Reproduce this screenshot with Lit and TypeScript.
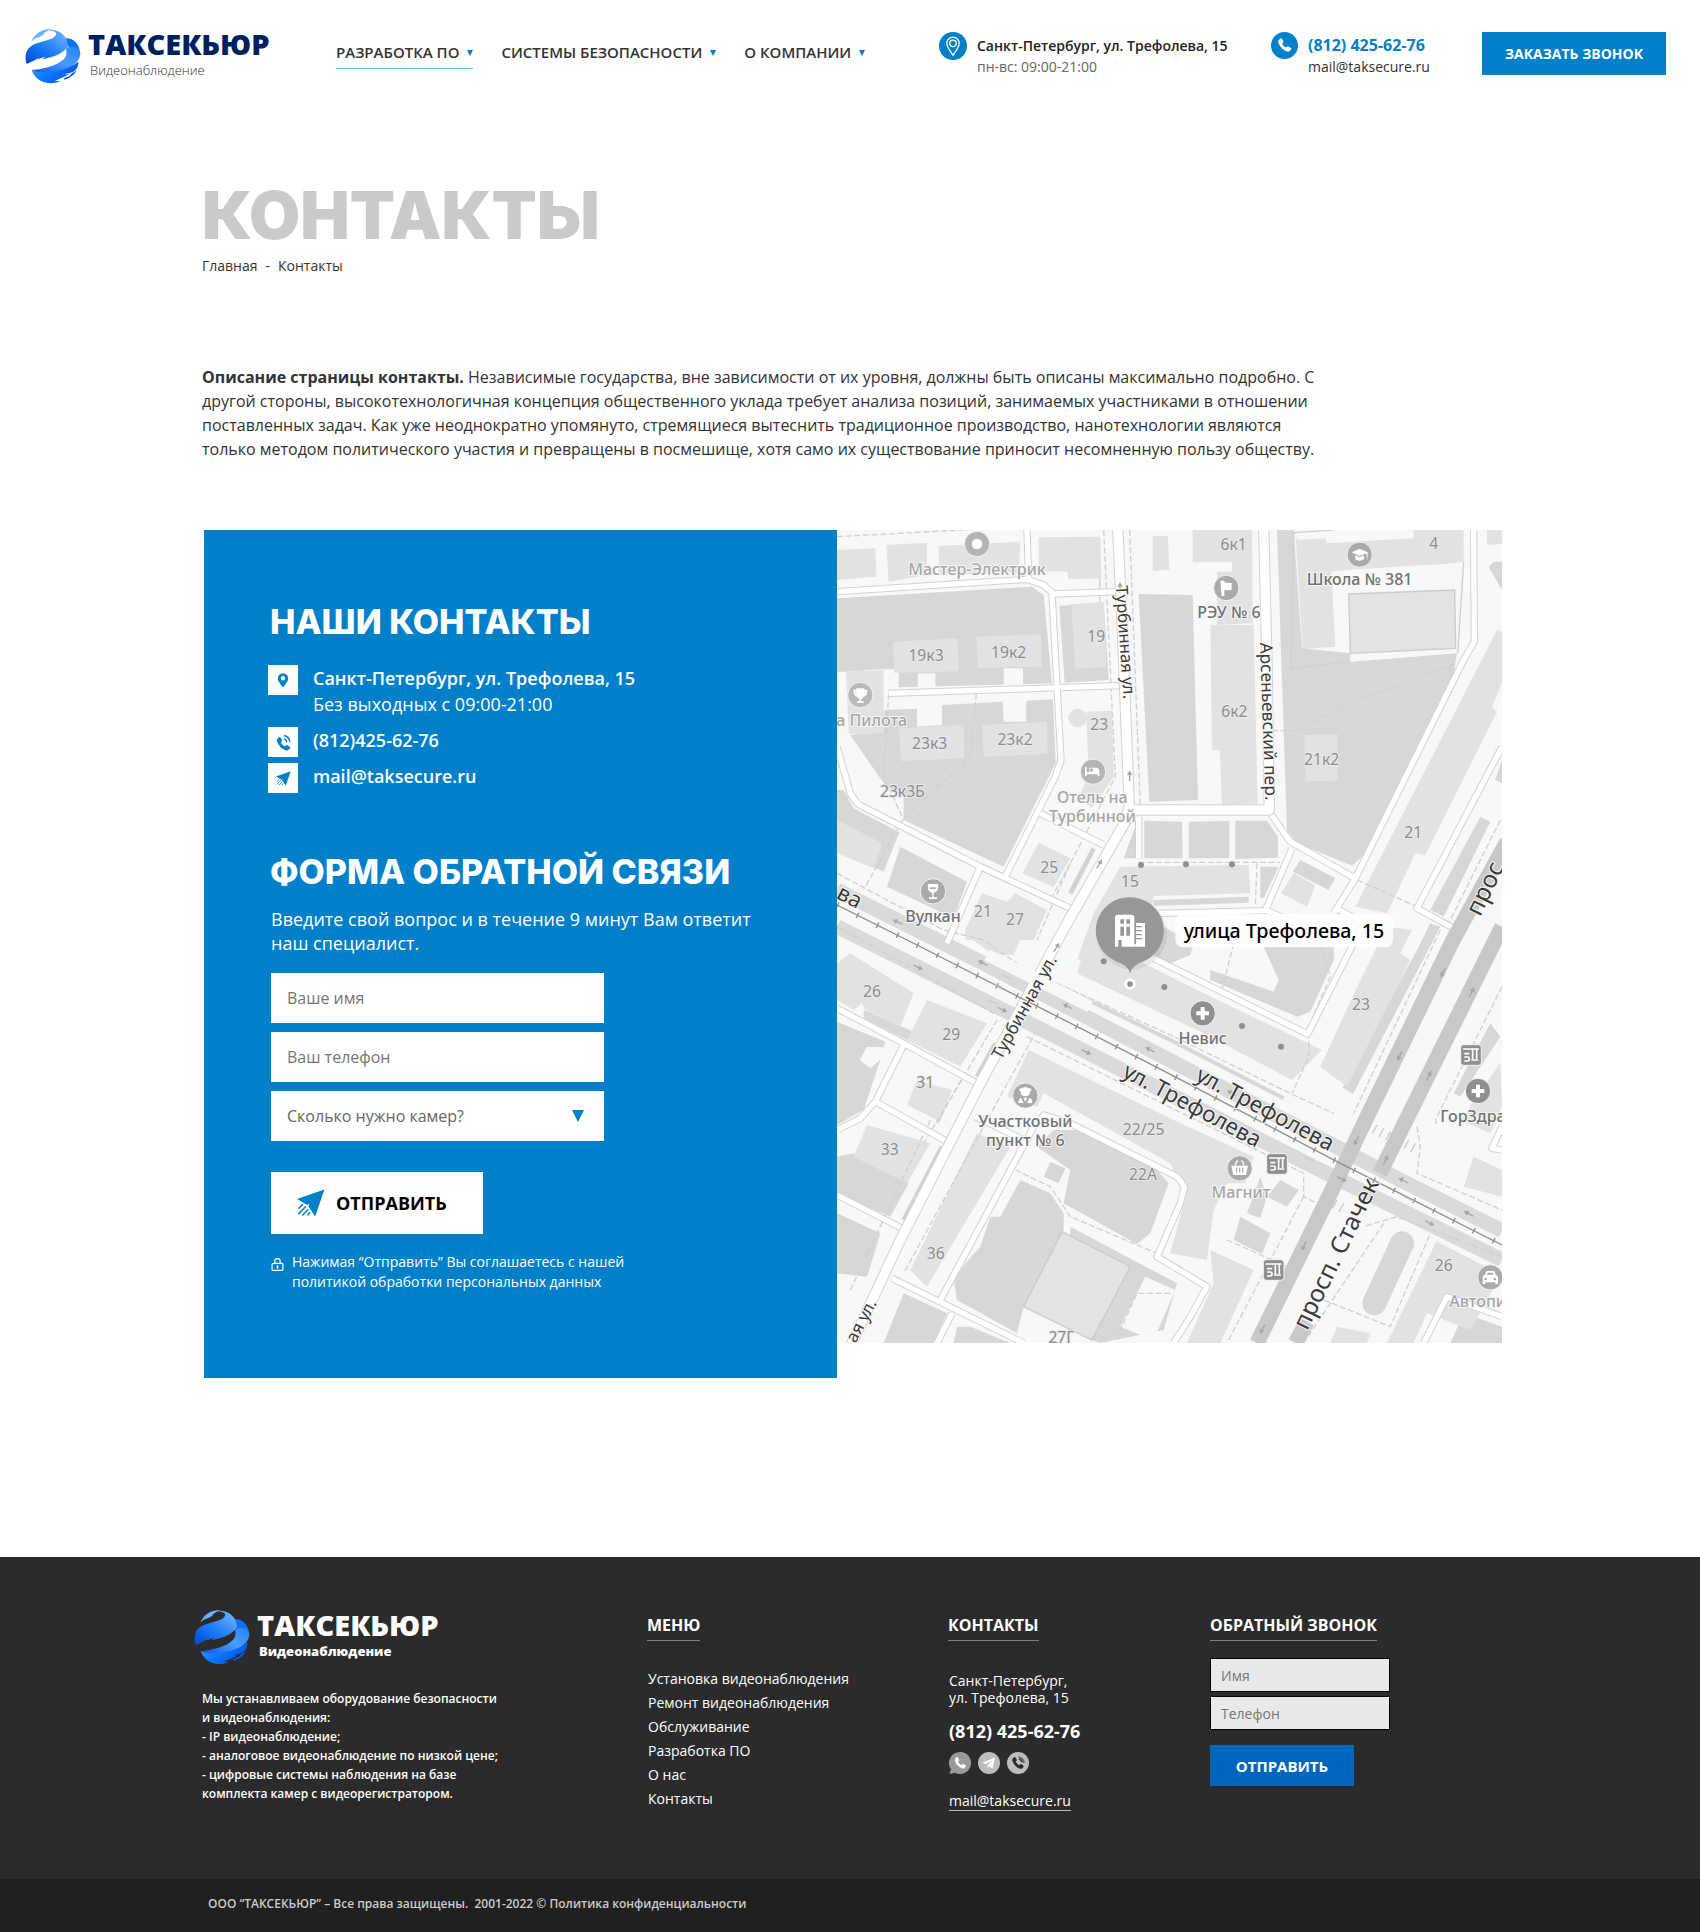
import { LitElement, html, svg, css } from "lit";
import { customElement, property } from "lit/decorators.js";

const SANS = css`"Open Sans", "Noto Sans", sans-serif`;
const DISPLAY = css`Inter, "Open Sans", sans-serif`;

const handset =
  "M6.6 3.2c.6-.6 1.5-.5 2 .2l1.9 2.8c.4.6.3 1.3-.2 1.8l-1.2 1.1c.6 1.9 2.9 4.3 4.9 5l1.2-1.1c.5-.5 1.2-.6 1.8-.2l2.8 1.9c.7.5.8 1.4.2 2l-1.6 1.7c-.8.8-2 1-3.1.7C10.2 17.5 5.9 13 4.3 8c-.3-1.1-.1-2.3.7-3.1z";

const glyphs: Record<string, unknown> = {
  down: svg`<path d="M0 0h24L12 24z" fill="currentColor"/>`,
  pinCircle: svg`<circle cx="12" cy="12" r="12" fill="#0080c8"/>
    <g fill="none" stroke="#fff" stroke-width="1.1">
      <path d="M12 20C9.5 16 6.7 13.2 6.7 9.7a5.3 5.3 0 0 1 10.6 0C17.3 13.2 14.5 16 12 20z"/>
      <circle cx="12" cy="9.7" r="2.8"/></g>`,
  phoneCircle: svg`<circle cx="12" cy="12" r="12" fill="#0080c8"/>
    <path transform="translate(3.4 3.6) scale(.72)" fill="#fff" d=${handset}/>`,
  pin: svg`<path fill="#0080c8" fill-rule="evenodd" d="M12 4.5a5.7 5.7 0 0 0-5.7 5.7c0 3.7 3.2 6.3 5.7 10.3 2.5-4 5.7-6.6 5.7-10.3A5.7 5.7 0 0 0 12 4.5zm0 3.2a2.4 2.4 0 1 1 0 4.8 2.4 2.4 0 0 1 0-4.8z"/>`,
  call: svg`<path transform="translate(1.5 4) scale(.9)" fill="#0080c8" d=${handset}/>
    <path d="M13.5 8.7c1.3.6 2.2 1.6 2.6 3M13.6 5.2c3.2.7 5.2 2.9 5.8 6.1" fill="none" stroke="#0080c8" stroke-width="1.5" stroke-linecap="round"/>`,
  plane: svg`<path fill="#0080c8" d="M23.5.5 0 8.6l8.8 5.2 1.6-1.3-.6 2.4L15.6 23.5z"/>
    <path d="M4.8 13.4 1.6 16.5M7.3 15.2l-5.7 5.9M9.2 17.8 5 22.3M11 20.3l-1.7 2" fill="none" stroke="#0080c8" stroke-width="1.3" stroke-linecap="round"/>`,
  lock: svg`<g fill="none" stroke="#fff" stroke-width="2.2"><rect x="2" y="10" width="20" height="13" rx="2"/>
    <path d="M7 10V6a5 5 0 0 1 10 0V10"/></g><path d="M10.5 13.5h3v6h-3z" fill="#fff"/>`,
  whatsapp: svg`<path fill="#999" d="M12 0a12 12 0 1 1-5.5 22.6L.6 24l1.5-5.3A12 12 0 0 1 12 0z"/>
    <path transform="translate(3 3.4) scale(.76)" fill="#fff" d=${handset}/>`,
  telegram: svg`<circle cx="12" cy="12" r="12" fill="#bdbdbd"/>
    <path fill="#fff" d="M18.5 6 4.6 11.6l4 1.7 7.3-4.8-5.3 5.6-.2 3.5 2-2 3.5 2.6z"/>`,
  viber: svg`<circle cx="12" cy="12" r="12" fill="#bdbdbd"/>
    <path transform="translate(2.4 3.4) scale(.78)" fill="#2b2b2b" d=${handset}/>
    <path d="M12 4.500c4.5.4 7.3 3.3 7.5 7.5h-2l-3-2z" fill="#666"/>
    <path d="M13 8c1.8.3 2.8 1.3 3.1 3" fill="none" stroke="#2b2b2b"/>`,
};

@customElement("ui-icon")
export class UiIcon extends LitElement {
  @property() name = "";
  @property({ type: Number }) size = 24;

  static styles = css`
    :host { display: inline-flex; flex: none; }
    svg { display: block; }
  `;

  render() {
    return html`<svg viewBox="0 0 24 24" width=${this.size} height=${this.size} aria-hidden="true">${glyphs[this.name]}</svg>`;
  }
}

@customElement("brand-logo")
export class BrandLogo extends LitElement {
  @property({ type: Boolean, reflect: true }) inverse = false;

  static styles = css`
    :host { display: block; }
    .logo { display: flex; gap: 7px; color: #001f60; text-decoration: none; }
    .globe { width: 56px; height: 56px; flex: none; }
    .name { font: 800 29px/32px ${SANS}; display: block; }
    .tag { font: 300 13px/16px ${SANS}; display: block; color: #333; padding: 2px 0 0 2px; }
    :host([inverse]) .logo { color: #fff; }
    :host([inverse]) .tag { color: #fff; font-weight: 800; }
  `;

  render() {
    return html`<a class="logo" href="#">
      <svg class="globe" viewBox="14 21 168 170" aria-hidden="true">
        <defs>
          <linearGradient id="a" x1="0" y1="1" x2="1" y2="0"><stop offset="0" stop-color="#0047d6"/><stop offset=".45" stop-color="#1a7df5"/><stop offset="1" stop-color="#7ab8ff"/></linearGradient>
          <linearGradient id="b" x1="0" y1="1" x2="1" y2="0"><stop offset="0" stop-color="#0a55e8"/><stop offset=".5" stop-color="#4b9bff"/><stop offset="1" stop-color="#1a78f5"/></linearGradient>
          <linearGradient id="c" x1="0" y1="0" x2="1" y2=".6"><stop offset="0" stop-color="#4c9dff"/><stop offset=".5" stop-color="#0a7bff"/><stop offset="1" stop-color="#0052e0"/></linearGradient>
        </defs>
        <path fill="url(#a)" d="M15 118C13 95 22 80 38 72C60 62 98 58 106 44C112 33 98 28 84 30C108 19 142 42 145 74C138 90 112 104 90 110L66 117L74 108L50 117L56 111L38 121C24 127 18 132 17 128Z"/>
        <path fill="#6db2ff" d="M32 62C42 38 66 22 96 24C84 28 74 33 66 40L74 37C64 46 54 50 46 52C40 55 36 59 32 62Z"/>
        <path fill="url(#b)" d="M138 53C162 51 178 72 181 98C180 132 138 148 106 154C72 160 44 158 33 148C58 148 108 138 130 116C150 96 128 78 146 80C144 70 142 60 138 53Z"/>
        <path fill="#1470f0" d="M138 53C158 50 172 66 178 88C172 82 158 76 146 79Z"/>
        <path fill="url(#c)" d="M33 149C70 164 140 152 175 123C176 136 170 148 162 152C150 160 144 156 132 162L146 161C136 170 124 172 116 176L104 182L120 182C104 190 84 190 70 185C52 178 38 164 33 149Z"/>
        <path fill="#0a5cf0" d="M134 178C152 172 164 162 170 150L156 158L148 167L130 174Z"/>
      </svg>
      <span><span class="name">ТАКСЕКЬЮР</span><span class="tag">Видеонаблюдение</span></span>
    </a>`;
  }
}

/* Map geometry, three units to a screen pixel. */
const greenery = [
  "0,205 585,170 620,195 645,460 185,472 185,418 125,418 30,425 0,425",
  "142,540 240,536 240,590 315,585 315,525 497,515 500,575 568,575 568,512 648,508 656,700 500,1010 200,870 200,800 140,760 40,615 140,605",
  "667,228 800,216 815,450 683,458",
  "905,192 1067,195 1083,810 937,815",
  "0,780 20,780 50,835 187,907 140,1025 0,960",
  "190,950 390,1055 350,1165 150,1070",
  "900,875 905,875 905,985 860,985", "922,872 1035,875 1037,985 922,985",
  "1055,875 1177,873 1177,985 1055,985", "1195,872 1290,872 1323,920 1323,983 1195,987",
  "950,1110 1235,1100 1235,1118 950,1128", "1270,1010 1325,1010 1280,1105 1270,1105",
  "1320,0 1370,0 1395,355 1540,370 1540,395 1860,370 1850,430 1575,980 1545,1007 1380,940 1350,900",
  "1390,990 1495,1045 1475,1080 1368,1025", "1930,860 1960,875 1820,1160 1780,1140",
  "1955,110 1970,95 1995,95 1995,180", "1995,690 1974,750 1995,760",
  "960,1180 1070,1240 1060,1275 1000,1300 950,1280",
  "1120,1320 1310,1385 1325,1350 1280,1250 1490,1250 1490,1290 1420,1445 1380,1460 1120,1350",
  "1740,1260 1780,1180 1810,1190 1548,1692 1517,1672",
  "0,1475 145,1535 140,1552 90,1550 68,1590 100,1615 130,1590 80,1740 0,1785",
  "0,1880 50,1870 215,1960 160,2060 0,1990", "0,2050 130,2110 90,2240 0,2230",
  "600,1850 650,1800 720,1800 960,1920 995,1960 940,2110 900,2142 680,2020 700,1920",
  "550,1950 640,1990 680,2050 680,2100 560,2330 540,2410 360,2310 350,2250 385,2200 430,2150 460,2060 490,2060",
  "700,2090 1020,2260 980,2400 790,2439 765,2430 880,2210 700,2120",
  "200,2290 330,2350 290,2439 140,2439", "360,2390 400,2390 520,2439 350,2439",
  "640,1895 685,1915 665,1960 620,1940", "80,1440 300,1535 300,1565 210,1530 80,1465",
  "1210,2060 1300,2110 1275,2172 1190,2130", "1330,1950 1385,1980 1350,2030 1290,2000",
  "1270,1940 1290,2000 1270,2065 1230,2050", "1880,2350 1995,2390 1995,2439 1840,2439",
  "1990,1520 1870,1700 1850,1690 1960,1480",
];
const buildings = [
  "0,60 115,55 118,140 0,150", "148,45 270,38 270,135 155,155", "305,48 550,35 545,130 305,135",
  "605,22 790,20 793,145 695,148 690,125 605,122",
  "27,425 140,420 140,610 35,612", "168,335 362,325 364,424 172,428", "418,320 612,312 615,410 422,414",
  "186,595 380,585 382,685 192,693", "435,585 630,575 632,672 440,680", "703,222 800,218 808,412 715,415",
  "748,545 825,542 830,740 765,835 725,800 755,740", "0,870 135,940 110,1015 0,970",
  "605,938 700,985 650,1072 557,1030", "435,1090 510,1115 535,1090 630,1140 590,1230 385,1230 385,1200",
  "1067,0 1245,0 1247,280 1140,285 1140,125 1185,125 1185,97 1067,97",
  "1120,285 1250,285 1262,820 1155,825 1148,660 1125,660", "947,18 993,18 997,120 947,122",
  "1375,5 1380,30 1465,25 1470,40 1730,25 1730,0 1880,0 1880,95 1800,105 1770,110 1750,105 1483,125 1495,350 1397,357",
  "1402,615 1502,613 1503,752 1405,754", "1980,300 1995,305 1995,460 1965,530 1980,545 1765,975 1735,970 1650,1150 1555,1130",
  "1370,1030 1435,1065 1410,1130 1332,1090", "1950,0 1995,0 1995,42 1950,45",
  "850,1010 1235,1005 1240,1090 950,1098 930,1250 720,1290 770,1150",
  "720,1330 750,1230 900,1290 1100,1390 1455,1560 1365,1650 1100,1510",
  "1570,1350 1650,1190 1725,1200 1690,1270 1720,1290 1530,1670 1450,1610",
  "0,1300 40,1270 230,1390 190,1490 85,1440 75,1420 50,1440 0,1410",
  "270,1410 450,1480 370,1610 210,1530", "240,1650 345,1680 310,1775 210,1725",
  "90,1785 280,1840 210,1960 50,1880", "420,1810 520,1850 270,2270 220,2220 235,2190",
  "575,1560 1010,1770 1250,1880 1225,1960 1170,1960 1130,2040 1110,2190 1000,2170 1045,2000 1000,1900 620,1690 600,1730 510,1700",
  "1120,2160 1250,2220 1150,2439 1050,2439 1130,2260", "1910,1880 1995,1920 1995,2000 1880,1970",
  "1800,2130 1995,2230 1900,2400 1770,2350 1730,2439 1650,2439", "1990,1600 1870,1770 1960,1810 1995,1730",
  "1500,2390 1600,2410 1590,2439 1480,2439", "550,1225 400,1225 470,1275 530,1275",
];
const yards = ["1495,122 1885,98 1865,368 1540,395 1540,370 1495,350", "925,2240 1015,2280 950,2430 850,2390", "242,430 295,430 295,475 242,475", "500,415 558,415 558,465 500,465"];
const courts = ["1535,192 1853,180 1856,355 1540,370", "675,2105 880,2210 765,2430 560,2330"];
const lanes = [
  "0,185 570,148 620,165 650,192 840,185", "570,0 575,148", "645,190 672,690 655,740 505,1040",
  "155,490 845,467", "0,650 40,790 62,822 430,1010 700,1135", "430,1010 330,1240", "610,850 800,945",
  "1300,850 1360,935 1555,1045", "1910,0 1912,335 1880,390 1555,1045 1490,1150", "1365,955 1285,1142 965,1150",
  "1995,650 1740,1135 1860,1200", "950,1285 1412,1512 1580,1180 1500,1135", "0,1435 200,1540 420,1660",
  "200,1545 115,1715 70,1765 0,1800", "115,1715 330,1835", "0,1995 195,2095", "165,2245 560,2439",
  "1020,1940 700,1780 620,1755 590,1790 310,2310", "415,1760 560,1830", "345,2350 300,2439",
  "1020,1940 1042,1970 1030,2020 960,2180 1110,2270 1060,2360 1010,2439", "1290,1142 1450,1210",
  "1995,1860 1965,1855 1995,1790", "1995,2360 1830,2300 1760,2439", "905,985 905,860",
];
const dashes = [
  "0,20 560,-10", "800,0 835,740 700,1000 600,1230", "878,0 910,830 690,1200", "155,490 140,740 200,870", "418,490 400,680 200,865 85,1070",
  "905,997 1330,997", "1305,602 1380,602 1520,525 1860,400", "1260,1000 1255,1130", "0,1030 320,1200 440,1230 540,1300",
  "0,1190 470,1450", "570,1520 1280,1870 1400,1930 1400,2000 1440,2020", "660,1360 1000,1515 1370,1695 1490,1750",
  "480,1470 380,1640 260,1840", "600,1500 500,1680 200,2230", "280,1770 40,2280", "535,1920 640,1970 700,2060 960,2170",
  "1460,2310 1660,2390 1780,2110", "1995,2180 1680,2060 1580,2090", "1995,1370 1795,1770 1800,1790", "1740,1790 1750,1850 1740,1930 1995,2040",
  "1000,2290 900,2290 850,2400 790,2430", "1190,1240 1155,1380", "1450,1240 1480,1340 1415,1490 1415,1580 1365,1690", "1990,870 1830,1190",
  "1560,1050 1740,1130", "1400,2000 1170,2439", "1640,2080 1400,2439", "1170,2130 1350,2210", "1810,1200 1550,1750",
  "372,1650 300,1780", "700,1000 640,1110",
];
const numbers: [string, number, number][] = [
  ["19к3", 267, 392], ["19к2", 515, 383], ["19", 778, 335], ["23к3", 278, 656], ["23к2", 534, 645], ["23", 787, 600],
  ["23к3Б", 196, 802], ["25", 637, 1029], ["15", 879, 1070], ["21", 438, 1160], ["27", 534, 1185], ["6к1", 1190, 60],
  ["4", 1790, 58], ["6к2", 1192, 561], ["21к2", 1454, 705], ["21", 1729, 923], ["26", 105, 1400], ["29", 343, 1530],
  ["31", 265, 1675], ["33", 158, 1874], ["36", 296, 2188], ["22/25", 920, 1816], ["22А", 918, 1949], ["27Г", 673, 2438],
  ["23", 1572, 1440], ["26", 1820, 2222],
];
const places: [string, number, number, string][] = [
  ["Мастер-Электрик", 420, 135, "faint"], ["а Пилота", 104, 588, "faint"], ["Отель на", 766, 820, "faint"],
  ["Турбинной", 766, 876, "faint"], ["Вулкан", 288, 1176, "place"], ["РЭУ № 6", 1176, 265, "place"],
  ["Школа № 381", 1568, 166, "place"], ["Невис", 1097, 1541, "place"], ["Участковый", 565, 1790, "place"],
  ["пункт № 6", 565, 1847, "place"], ["Магнит", 1212, 2005, "faint"], ["ГорЗдра", 1908, 1775, "place"],
  ["Автопи", 1922, 2332, "faint"],
];
const streets: [string, number, number, number, number][] = [
  ["Турбинная ул.", 848, 338, 86, 50], ["Арсеньевский пер.", 1277, 575, 88, 52], ["Турбинная ул.", 577, 1440, -61, 51],
  ["ая ул.", 88, 2380, -62, 51], ["ва", 28, 1120, 27, 66], ["ул. Трефолева", 1274, 1757, 28, 67],
  ["ул. Трефолева", 1055, 1746, 28, 67], ["просп. Стачек", 1519, 2182, -64, 73], ["прос", 1966, 1086, -64, 73],
];
const pois: [number, number, string, unknown][] = [
  [420, 42, "#b4b4b4", svg`<circle r="16" fill="#fff"/>`],
  [70, 495, "#b9b9b9", svg`<path d="M-12-20h24v4h9c0 14-4 20-12 21-2 5-5 6-7 7v7h8v5h-20v-5h8v-7c-3-1-6-3-7-7-8-1-12-8-12-21h9zm-3 8c0 5 1 8 4 9zm30 0-4 9c3-1 4-4 4-9z" fill="#fff"/>`],
  [768, 725, "#b4b4b4", svg`<path d="M-24-14h5V2h8v-14h22q8 2 8 12v14h-5v-6h-33v6h-5z" fill="#fff"/><circle cx="-5" cy="-5" r="5" fill="#b4b4b4"/>`],
  [288, 1084, "#aaa", svg`<path d="M-15-22h30q4 22-13 27v13h10v5h-24v-5h10V5q-17-5-13-27z" fill="#fff"/><path d="M-10-12h20v5h-20z" fill="#aaa"/>`],
  [1168, 174, "#aaa", svg`<path d="M-18-22l12 0v4q12 5 22 2v21q-12 4-22 0v19h-8z" fill="#fff"/>`],
  [1568, 74, "#aaa", svg`<path d="M0-18 24-7 23 18 20-4 0 4-24-7zM-13 2l13 6 13-6v12q-13 8-26 0z" fill="#fff"/>`],
  [1097, 1450, "#8f8f8f", svg`<path d="M-6-19H6V-6h13V6H6v13H-6V6h-13V-6h13z" fill="#fff"/>`],
  [1923, 1683, "#8f8f8f", svg`<path d="M-6-19H6V-6h13V6H6v13H-6V6h-13V-6h13z" fill="#fff"/>`],
  [565, 1697, "#aaa", svg`<path d="M-19-20 0-26 19-20 14-11q0 13-14 13t-14-13zM-21 22q0-12 8-16L-5 22zM21 22q0-12-8-16L5 22zM-6 6h12L0 18z" fill="#fff"/>`],
  [1208, 1915, "#aaa", svg`<path d="M-25-8h50l-6 28h-38z" fill="#fff"/><path d="M-13-8q2-14 8-14M13-8q-2-14-8-14" fill="none" stroke="#fff" stroke-width="4"/><path d="M-9-2v14M0-2v14M9-2v14" stroke="#aaa" stroke-width="4"/>`],
  [1960, 2242, "#aaa", svg`<path d="M-23 0q1-6 7-8l4-11h24l4 11q6 2 7 8v20h-8v-5h-30v5h-8z" fill="#fff"/><path d="M-10-8l2-6H8l2 6z" fill="#aaa"/><circle cx="-14" cy="5" r="4" fill="#aaa"/><circle cx="14" cy="5" r="4" fill="#aaa"/>`],
];
const stops: [number, number][] = [[1902, 1575], [1320, 1902], [1310, 2220]];
const entrances: [number, number][] = [[912, 1005], [1047, 1003], [1185, 1003], [800, 1294], [982, 1371], [1215, 1488], [1332, 1550]];
const arrows: [number, number, number][] = [
  [849, 170, -90], [878, 735, -90], [788, 1000, -60], [660, 1250, -60], [180, 1175, 205], [245, 1313, 27], [435, 1298, 207], [498, 1440, 27],
  [690, 1428, 207], [750, 1567, 27], [937, 1558, 207], [1182, 1688, 207], [1517, 1948, 27], [1780, 2080, 27], [1697, 1950, 207], [1893, 2050, 207],
  [1817, 1330, 117], [1687, 1580, 117], [1557, 1834, 117], [1400, 2150, 117], [1275, 2400, 117], [1905, 1385, -63], [1777, 1635, -63], [1647, 1888, -63],
];

@customElement("street-map")
export class StreetMap extends LitElement {
  static styles = css`
    :host { display: block; }
    svg { display: block; width: 100%; height: auto; }
    text { font-family: "Noto Sans", "Open Sans", sans-serif; text-anchor: middle; paint-order: stroke; stroke: #f8f8f8; stroke-width: 6px; stroke-linejoin: round; }
    .number { font-size: 47px; fill: #8c8c8c; stroke: #e9e9e9; }
    .place { font-size: 48px; font-weight: 500; fill: #717171; }
    .faint { font-size: 48px; font-weight: 500; fill: #a6a6a6; }
    .street { fill: #3a3a3a; }
    .target { font-size: 59px; font-weight: 500; fill: #000; stroke: none; }
    .casing, .lane, .dash { fill: none; stroke-linejoin: round; }
    .casing { stroke: #d2d2d2; stroke-width: 22px; }
    .lane { stroke: #fff; stroke-width: 16px; }
    .wide.casing { stroke-width: 34px; }
    .wide.lane { stroke-width: 28px; }
    .dash { stroke: #d0d0d0; stroke-width: 4px; stroke-dasharray: 18 8; }
    .green { fill: #d7d7d7; }
    .house { fill: #e2e2e2; }
    .yard { fill: #f8f8f8; }
    .court { fill: #e3e3e3; stroke: #cbcbcb; stroke-width: 4px; }
    .carriage { fill: none; stroke: #dadada; stroke-width: 44px; }
    .avenue { fill: none; stroke: #c8c8c8; stroke-width: 46px; }
  `;

  render() {
    const wide = [
      "842,-10 856,300 877,830 862,880 690,1180 430,1660 190,2130 40,2450",
      "885,840 1297,840 1290,400 1280,-10",
    ];
    return html`<svg viewBox="0 0 1995 2439" role="img" aria-label="улица Трефолева, 15">
      <rect width="1995" height="2439" fill="#f8f8f8"/>
      ${greenery.map((p) => svg`<polygon class="green" points=${p}/>`)}
      ${buildings.map((p) => svg`<polygon class="house" points=${p}/>`)}
      ${yards.map((p) => svg`<polygon class="yard" points=${p}/>`)}
      ${courts.map((p) => svg`<polygon class="court" points=${p}/>`)}
      <circle cx="722" cy="564" r="28" fill="#e2e2e2"/>
      <path d="M1695 2140 1612 2320" stroke="#d7d7d7" stroke-width="72" stroke-linecap="round"/>
      <path d="M788 145V215M1490 0 1370 8 1362 415 1540 395M1880 95 1862 370" fill="none" stroke="#d0d0d0" stroke-width="4"/>
      <path d="M770 955 700 1090M475 1540 420 1640M315 1850 200 2070" stroke="#d2d2d2" stroke-width="14"/>
      <path d="M0 1125 1995 2145" stroke="#f8f8f8" stroke-width="160"/>
      <polyline class="carriage" points="0,1080 435,1298 935,1558 1690,1950 1995,2102"/>
      <polyline class="carriage" points="0,1190 240,1310 750,1567 1505,1948 1995,2190"/>
      <path d="M660 1365 1000 1530 1340 1705" fill="none" stroke="#d7d7d7" stroke-width="12"/>
      ${dashes.map((p) => svg`<polyline class="dash" points=${p}/>`)}
      ${lanes.map((p) => svg`<polyline class="casing" points=${p}/>`)}
      ${lanes.map((p) => svg`<polyline class="lane" points=${p}/>`)}
      ${wide.map((p) => svg`<polyline class="casing wide" points=${p}/>`)}
      ${wide.map((p) => svg`<polyline class="lane wide" points=${p}/>`)}
      <path d="M450 1275 760 1430" stroke="#f8f8f8" stroke-width="36"/>
      <polyline class="avenue" points="2010,935 1848,1230 1600,1740 1490,1970 1260,2439"/>
      <polyline class="avenue" points="1995,1190 1628,1930"/>
      <path d="M1410 2375 1375 2439" stroke="#c8c8c8" stroke-width="46"/>
      <path d="M0 1125 240 1245 960 1612 1500 1895 1995 2145" fill="none" stroke="#8e8e8e" stroke-width="4"/>
      <path d="M0 1125 240 1245 960 1612 1500 1895 1995 2145" fill="none" stroke="#8e8e8e" stroke-width="18" stroke-dasharray="4 63"/>
      <path d="M470 1360l26 12M455 1410l26 12M495 1335l26 12M1565 1770l-14 26M1600 1775l-14 26M1620 1785l-14 26M1640 1795l-14 26M1660 1805l-14 26M1715 1830l-14 26M1735 1840l-14 26M1500 2010l-14 26M1520 2020l-14 26M1400 1880l30 14M1700 2000l30 14" stroke="#cacaca" stroke-width="4"/>
      ${arrows.map(([x, y, a]) => svg`<path transform="translate(${x} ${y}) rotate(${a})" d="M-18-2H0V-8L14 0 0 8V2H-18z" fill="#a6a6a6"/>`)}
      ${entrances.map(([x, y]) => svg`<circle cx=${x} cy=${y} r="9" fill="#8f8f8f"/>`)}
      ${numbers.map(([t, x, y]) => svg`<text class="number" x=${x} y=${y}>${t}</text>`)}
      ${streets.map(([t, x, y, a, s]) => svg`<text class="street" font-size=${s} transform="translate(${x} ${y}) rotate(${a})">${t}</text>`)}
      ${places.map(([t, x, y, c]) => svg`<text class=${c} x=${x} y=${y}>${t}</text>`)}
      ${pois.map(([x, y, c, g]) => svg`<g transform="translate(${x} ${y})"><circle r="38" fill=${c} stroke="#f4f4f4" stroke-width="3"/>${g}</g>`)}
      ${stops.map(([x, y]) => svg`<g transform="translate(${x} ${y})"><rect x="-31" y="-31" width="62" height="62" rx="9" fill="#8f8f8f" stroke="#f4f4f4" stroke-width="3"/>
        <path d="M-24-18H24M-5-4H-20M-20 6H-11A6 6 0 0 1-11 18H-20M5-18V12M17-18V12M1 15H22" fill="none" stroke="#fff" stroke-width="5"/></g>`)}
      <rect x="1015" y="1152" width="653" height="100" rx="22" fill="#fff" fill-opacity=".85"/>
      <text class="target" x="1341" y="1224">улица Трефолева, 15</text>
      <circle cx="884" cy="1212" r="106" fill="#000" opacity=".06"/>
      <path d="M880 1102a100 100 0 0 1 42 191q-38 12-43 38q-4-26-44-38a100 100 0 0 1 45-191z" fill="#979797"/>
      <path d="M834 1163q0-9 9-9h40q9 0 9 9v80h5v-64h27v71h-70v-20h-10v20h-10z" fill="#fff"/>
      <path d="M850 1168h11v13h-11zM868 1168h11v13h-11zM850 1190h11v27h-11zM868 1190h11v27h-11zM897 1188h18v4h-18zM897 1200h18v4h-18zM897 1212h18v4h-18zM897 1224h18v4h-18z" fill="#979797"/>
      <circle cx="879" cy="1362" r="13" fill="#8f8f8f" stroke="#fff" stroke-width="9"/>
    </svg>`;
  }
}

@customElement("app-root")
export class AppRoot extends LitElement {
  static styles = css`
    :host { display: block; background: #fff; color: #333; font: 400 16px/24px ${SANS}; }
    * { box-sizing: border-box; }
    h1, h2, h3, p, ul { margin: 0; padding: 0; }
    ul { list-style: none; }
    a { color: inherit; text-decoration: none; }
    button { border: 0; padding: 0; cursor: pointer; font-family: inherit; }
    input, select { border: 0; border-radius: 0; width: 100%; font-family: inherit; color: #666; appearance: none; background: #fff; }
    input::placeholder { color: #757575; opacity: 1; }

    .header { display: grid; grid-template-columns: 311fr 603fr 332fr 211fr 184fr; align-items: start; padding: 28px 34px 9px 25px; }
    .nav { display: flex; gap: 28px; padding-top: 11px; }
    .nav-link { display: flex; align-items: center; gap: 8px; font-size: 15px; line-height: 27px; padding-bottom: 2px; font-weight: 600; white-space: nowrap; border-bottom: 1px solid transparent; }
    .nav-link.active { border-color: #72bde2; }
    .nav-link ui-icon { color: #0080c8; }
    .info { display: flex; align-items: flex-start; gap: 10px; white-space: nowrap; }
    .info-lines { display: flex; flex-direction: column; font-size: 14px; line-height: 21px; padding-top: 7px; }
    .strong { font-weight: 600; color: #222; }
    .muted { color: #666; }
    .tel { font-size: 16px; font-weight: 700; color: #0080c8; }
    .info ui-icon { padding-top: 4px; }
    .order { height: 43px; margin-top: 4px; background: #0080c8; color: #fff; font-size: 14px; font-weight: 700; }

    .intro { padding: 88px 198px 0 202px; }
    .title { font: 900 66px/68px ${DISPLAY}; color: #cacaca; }
    .crumbs { display: flex; gap: 8px; font-size: 14px; line-height: 20px; padding-top: 7px; }
    .about { padding-top: 89px; }

    .contact { display: grid; grid-template-columns: 633fr 665fr; align-items: start; padding: 69px 198px 179px 204px; }
    .panel { background: #0080c8; color: #fff; padding: 72px 66px 86px; }
    .heading { font: 800 34px/40px ${DISPLAY}; white-space: nowrap; }
    .list { display: grid; gap: 6px; padding-top: 23px; margin-left: -2px; }
    .row { display: flex; gap: 15px; font-size: 18px; line-height: 26px; font-weight: 600; }
    .row .plain { display: block; font-weight: 400; padding-bottom: 4px; }
    .badge { display: flex; align-items: center; justify-content: center; width: 30px; height: 30px; background: #fff; flex: none; }
    .form-heading { padding-top: 59px; }
    .lead { font-size: 18px; padding: 15px 0 0 1px; }
    .form { display: grid; gap: 9px; width: 333px; padding-top: 18px; margin-left: 1px; }
    .field { height: 50px; padding: 0 16px; font-size: 16px; }
    .select { display: grid; align-items: center; }
    .select > * { grid-area: 1 / 1; }
    .select ui-icon { justify-self: end; color: #0080c8; padding-right: 20px; pointer-events: none; }
    .send { display: flex; align-items: center; gap: 11px; width: 212px; height: 62px; margin-top: 22px; padding-left: 26px; background: #fff; color: #000; font-size: 18px; font-weight: 700; }
    .agree { display: flex; gap: 8px; font-size: 14px; line-height: 20px; font-weight: 500; padding-top: 18px; margin-left: 1px; }
    .agree ui-icon { padding-top: 6px; }

    .footer { background: #2b2b2b; color: #fff; display: grid; grid-template-columns: 453fr 301fr 262fr 292fr; padding: 52px 198px 66px 194px; font-size: 14px; }
    .blurb { font-size: 12px; line-height: 19px; font-weight: 600; padding: 24px 0 0 8px; }
    .col { padding-top: 4px; }
    .col-title { display: inline-block; font-size: 16px; line-height: 24px; font-weight: 700; padding-bottom: 3px; border-bottom: 1px solid #808080; }
    .menu { font-weight: 500; padding: 26px 0 0 1px; }
    .address { line-height: 17px; font-weight: 500; padding: 31px 0 0 1px; }
    .foot-tel { display: block; font-size: 18px; font-weight: 700; padding: 13px 0 0 1px; }
    .social { display: flex; gap: 7px; padding: 9px 0 8px 1px; }
    .mail { font-weight: 500; border-bottom: 1px solid #bbb; margin-left: 1px; }
    .callback { display: grid; gap: 4px; width: 180px; padding-top: 17px; }
    .small-field { height: 34px; padding: 0 10px; border: 1px solid #000; background: #e9e9e9; font-size: 14px; }
    .small-send { width: 144px; height: 41px; margin-top: 11px; background: #0066bd; color: #fff; font-size: 15px; font-weight: 700; }
    .copy { background: #202020; color: #ccc; font-size: 12px; line-height: 18px; font-weight: 600; padding: 16px 198px 20px 208px; white-space: pre-wrap; }
  `;

  render() {
    const nav = ["РАЗРАБОТКА ПО", "СИСТЕМЫ БЕЗОПАСНОСТИ", "О КОМПАНИИ"];
    const menu = ["Установка видеонаблюдения", "Ремонт видеонаблюдения", "Обслуживание", "Разработка ПО", "О нас", "Контакты"];
    return html`
      <header class="header">
        <brand-logo></brand-logo>
        <nav class="nav">
          ${nav.map((t, i) => html`<a class="nav-link ${i === 0 ? "active" : ""}" href="#">${t}<ui-icon name="down" size="6"></ui-icon></a>`)}
        </nav>
        <div class="info">
          <ui-icon name="pinCircle" size="28"></ui-icon>
          <div class="info-lines"><span class="strong">Санкт-Петербург, ул. Трефолева, 15</span><span class="muted">пн-вс: 09:00-21:00</span></div>
        </div>
        <div class="info">
          <ui-icon name="phoneCircle" size="27"></ui-icon>
          <div class="info-lines"><a class="tel" href="tel:+78124256276">(812) 425-62-76</a><a href="mailto:mail@taksecure.ru">mail@taksecure.ru</a></div>
        </div>
        <button class="order" type="button">ЗАКАЗАТЬ ЗВОНОК</button>
      </header>

      <main>
        <section class="intro">
          <h1 class="title">КОНТАКТЫ</h1>
          <nav class="crumbs"><a href="#">Главная</a><span>-</span><span>Контакты</span></nav>
          <p class="about"><b>Описание страницы контакты.</b> Независимые государства, вне зависимости от их уровня, должны быть описаны максимально подробно. С<br>другой стороны, высокотехнологичная концепция общественного уклада требует анализа позиций, занимаемых участниками в отношении<br>поставленных задач. Как уже неоднократно упомянуто, стремящиеся вытеснить традиционное производство, нанотехнологии являются<br>только методом политического участия и превращены в посмешище, хотя само их существование приносит несомненную пользу обществу.</p>
        </section>

        <section class="contact">
          <div class="panel">
            <h2 class="heading">НАШИ КОНТАКТЫ</h2>
            <ul class="list">
              <li class="row"><span class="badge"><ui-icon name="pin" size="22"></ui-icon></span><span>Санкт-Петербург, ул. Трефолева, 15<span class="plain">Без выходных с 09:00-21:00</span></span></li>
              <li class="row"><span class="badge"><ui-icon name="call" size="22"></ui-icon></span><a href="tel:+78124256276">(812)425-62-76</a></li>
              <li class="row"><span class="badge"><ui-icon name="plane" size="15"></ui-icon></span><a href="mailto:mail@taksecure.ru">mail@taksecure.ru</a></li>
            </ul>
            <h2 class="heading form-heading">ФОРМА ОБРАТНОЙ СВЯЗИ</h2>
            <p class="lead">Введите свой вопрос и в течение 9 минут Вам ответит<br>наш специалист.</p>
            <form class="form">
              <input class="field" type="text" placeholder="Ваше имя" aria-label="Ваше имя">
              <input class="field" type="tel" placeholder="Ваш телефон" aria-label="Ваш телефон">
              <div class="select">
                <select class="field" aria-label="Сколько нужно камер?"><option>Сколько нужно камер?</option></select>
                <ui-icon name="down" size="12"></ui-icon>
              </div>
              <button class="send" type="button"><ui-icon name="plane" size="28"></ui-icon>ОТПРАВИТЬ</button>
            </form>
            <p class="agree"><ui-icon name="lock" size="13"></ui-icon><span>Нажимая “Отправить” Вы соглашаетесь с нашей<br>политикой обработки персональных данных</span></p>
          </div>
          <street-map></street-map>
        </section>
      </main>

      <footer>
        <div class="footer">
          <div>
            <brand-logo inverse></brand-logo>
            <p class="blurb">Мы устанавливаем оборудование безопасности<br>и видеонаблюдения:<br>- IP видеонаблюдение;<br>- аналоговое видеонаблюдение по низкой цене;<br>- цифровые системы наблюдения на базе<br>комплекта камер с видеорегистратором.</p>
          </div>
          <div class="col">
            <h3 class="col-title">МЕНЮ</h3>
            <ul class="menu">${menu.map((t) => html`<li><a href="#">${t}</a></li>`)}</ul>
          </div>
          <div class="col">
            <h3 class="col-title">КОНТАКТЫ</h3>
            <p class="address">Санкт-Петербург,<br>ул. Трефолева, 15</p>
            <a class="foot-tel" href="tel:+78124256276">(812) 425-62-76</a>
            <div class="social">
              <a href="#" aria-label="WhatsApp"><ui-icon name="whatsapp" size="22"></ui-icon></a>
              <a href="#" aria-label="Telegram"><ui-icon name="telegram" size="22"></ui-icon></a>
              <a href="#" aria-label="Viber"><ui-icon name="viber" size="22"></ui-icon></a>
            </div>
            <a class="mail" href="mailto:mail@taksecure.ru">mail@taksecure.ru</a>
          </div>
          <div class="col">
            <h3 class="col-title">ОБРАТНЫЙ ЗВОНОК</h3>
            <form class="callback">
              <input class="small-field" type="text" placeholder="Имя" aria-label="Имя">
              <input class="small-field" type="tel" placeholder="Телефон" aria-label="Телефон">
              <button class="small-send" type="button">ОТПРАВИТЬ</button>
            </form>
          </div>
        </div>
        <div class="copy">ООО “ТАКСЕКЬЮР” – Все права защищены.  2001-2022 © <a href="#">Политика конфиденциальности</a></div>
      </footer>
    `;
  }
}
